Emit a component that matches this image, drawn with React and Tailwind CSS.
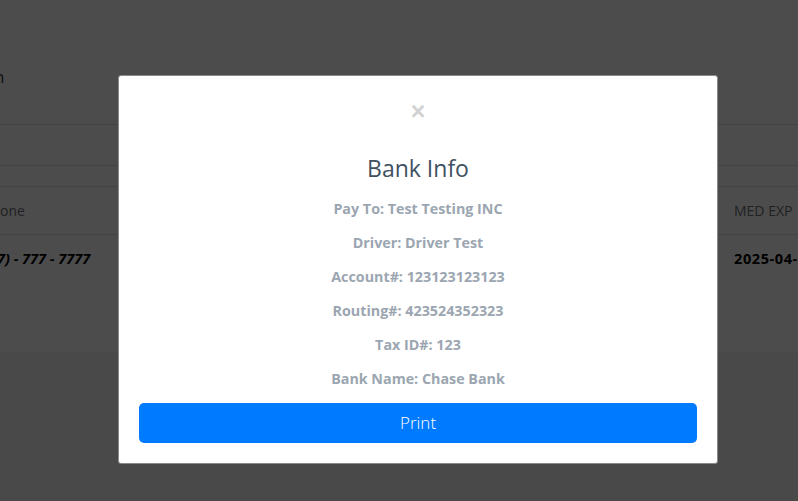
import React from 'react';

const info = [
    'Pay To: Test Testing INC',
    'Driver: Driver Test',
    'Account#: 123123123123',
    'Routing#: 423524352323',
    'Tax ID#: 123',
    'Bank Name: Chase Bank',
];

function BankInfoModal() {
    return (
        <div className="fixed inset-0 bg-black/70">
            <div className="ml-[118px] mt-[75px] w-[600px] h-[389px] bg-white border border-[#8a8a8a] rounded-[3px] px-[20px] flex flex-col items-center">
                {/* close button */}
                <button className="mt-[24px] h-[22px] text-[25px] leading-[22px] font-bold text-[#d2d2d2] font-['Liberation_Sans',sans-serif]">
                    ×
                </button>
                <h2 className="mt-[32px] text-[23px] leading-[28px] text-[#3f5160] font-['Open_Sans',sans-serif]">
                    Bank Info
                </h2>
                <div className="mt-[17px] flex flex-col items-center gap-[14px]">
                    {info.map((line) => (
                        <p key={line} className="text-[14.3px] leading-[20px] font-bold text-[#9ba6b1] font-['Open_Sans',sans-serif]">
                            {line}
                        </p>
                    ))}
                </div>
                <button className="mt-[14px] w-full h-[40px] rounded-[5px] bg-[#007bff] text-white text-[17px] font-['Open_Sans',sans-serif] font-light">
                    Print
                </button>
            </div>
        </div>
    );
}

function App() {
    return (
        <div className="min-h-screen bg-[#f3f3f3] overflow-hidden">
            <div className="bg-white h-[352px]">
                {/* header */}
                <div className="h-[125px] border-b border-[#e1e1e1] flex items-center">
                    <span className="-ml-[6px] mt-[30px] text-[17px] text-[#3a3a3a] font-['Open_Sans',sans-serif]">n</span>
                </div>
                <div className="h-[41px] border-b border-[#e1e1e1]" />
                <div className="h-[21px] border-b border-[#e1e1e1]" />
                {/* table */}
                <div className="h-[48px] border-b border-[#e1e1e1] flex items-center justify-between font-['Open_Sans',sans-serif] text-[14px] text-[#6b7075]">
                    <span className="-ml-[17px]">Phone</span>
                    <span className="mr-[14px] w-[50px] whitespace-nowrap">MED EXP</span>
                </div>
                <div className="h-[48px] flex items-center justify-between font-['Open_Sans',sans-serif] text-[14.5px] font-bold text-black">
                    <span className="-ml-[3px] italic whitespace-nowrap">7) - 777 - 7777</span>
                    <span className="mr-[-38px] w-[102px] tracking-[0.6px] whitespace-nowrap">2025-04-09</span>
                </div>
            </div>
            <BankInfoModal />
        </div>
    );
}

export default App;
